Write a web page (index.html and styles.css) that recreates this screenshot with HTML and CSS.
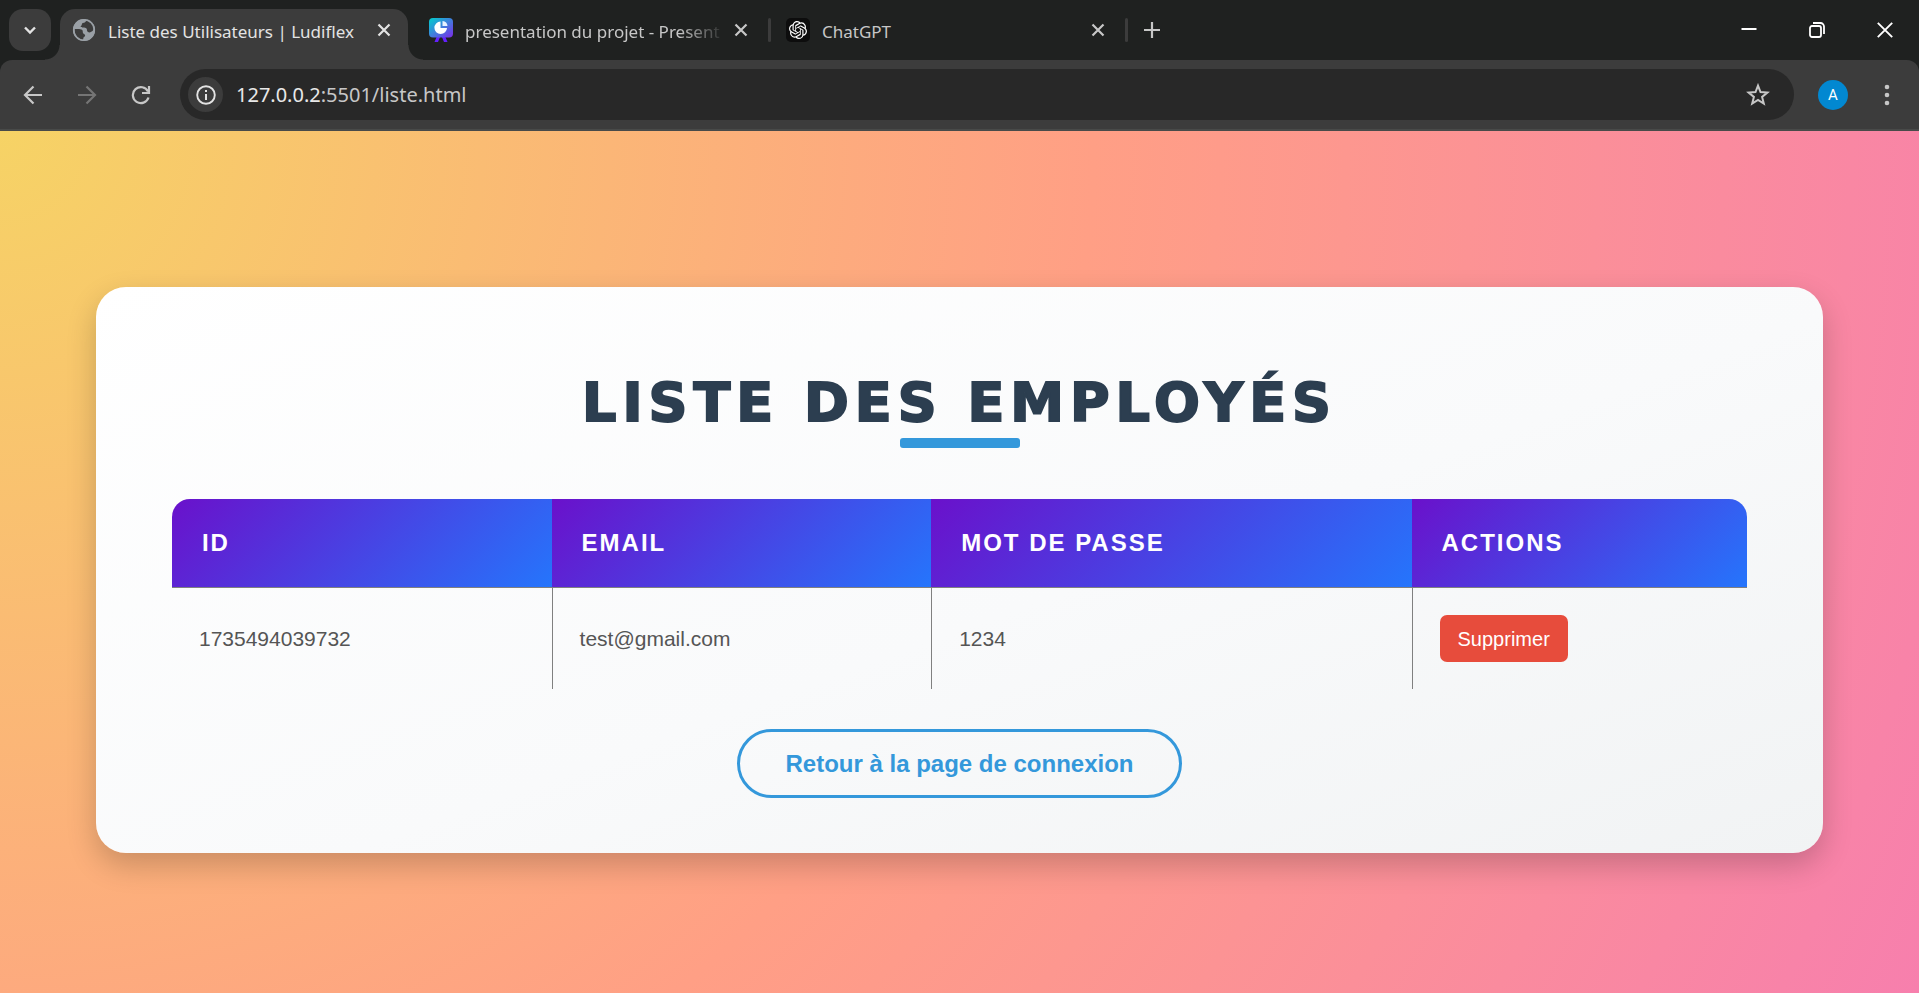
FILE: index.html
```html
<!DOCTYPE html>
<html lang="fr">
<head>
<meta charset="utf-8">
<title>Liste des Utilisateurs | Ludiflex</title>
<link rel="stylesheet" href="styles.css">
</head>
<body>
<header class="browser">
  <div class="tabstrip">
    <button class="tab-search" aria-label="Rechercher dans les onglets"><svg width="14" height="14" viewBox="0 0 14 14"><path d="M2 4.500l5 5 5-5" fill="none" stroke="#e3e3e3" stroke-width="2.400"/></svg></button>
    <div class="tab tab-active">
      <svg class="favicon" width="24" height="24" viewBox="0 0 24 24"><circle cx="12" cy="12" r="11" fill="#9aa0a6"/><path d="M14 1.500c.5 2-1 3.500-3.500 3.500-1 1.500-.5 2.500-2 3.500 1 2 4.500.5 6 2 .8 1 0 2.500 1.500 3.500s3.500 0 5-1.500l1-3C21 5 18.500 2.500 14 1.500zM2.500 11c2 0 6-.5 7.500.8 1.500 1.400 0 3.200 2 4.200s1 2.500-.5 3.500L11 22C6 21.500 2.500 17 2.500 11z" fill="#3c3c3c"/><circle cx="12" cy="12" r="10.300" fill="none" stroke="#9aa0a6" stroke-width="1.600"/></svg>
      <span class="tab-title">Liste des Utilisateurs | Ludiflex</span>
      <button class="close" aria-label="Fermer"><svg width="14" height="14" viewBox="0 0 14 14"><path d="M1.500 1.500l11 11M12.500 1.500l-11 11" stroke="#e3e3e3" stroke-width="2.200"/></svg></button>
    </div>
    <div class="tab">
      <svg class="favicon" width="24" height="24" viewBox="0 0 24 24"><defs><linearGradient id="g" x1="0" y1="0" x2="1" y2="1"><stop offset="0" stop-color="#00d0cc"/><stop offset=".5" stop-color="#3f7fdc"/><stop offset="1" stop-color="#7d2ae8"/></linearGradient></defs><path d="M8 18h3.500L9 24H5.500zM12.500 18H16l2.500 6H15z" fill="#6420ff"/><rect width="24" height="19.500" rx="4" fill="url(#g)"/><path d="M11.500 3.500V10H18a6.300 6.300 0 1 1-6.500-6.500z" fill="#fff"/><path d="M13.500 3a5.500 5.500 0 0 1 5 5h-5z" fill="#e6f1ff"/></svg>
      <span class="tab-title tab-fade">presentation du projet - Present</span>
      <button class="close" aria-label="Fermer"><svg width="14" height="14" viewBox="0 0 14 14"><path d="M1.500 1.500l11 11M12.500 1.500l-11 11" stroke="#c7c7c7" stroke-width="2.200"/></svg></button>
    </div>
    <span class="divider"></span>
    <div class="tab">
      <svg class="favicon" width="24" height="24" viewBox="0 0 24 24"><rect width="24" height="24" rx="5" fill="#0d0d0d"/><g transform="translate(3 3) scale(.75)"><path fill="#fff" d="M22.282 9.821a5.985 5.985 0 0 0-.516-4.910 6.046 6.046 0 0 0-6.510-2.900A6.065 6.065 0 0 0 4.981 4.182a5.985 5.985 0 0 0-3.998 2.900 6.046 6.046 0 0 0 .743 7.097 5.980 5.980 0 0 0 .510 4.911 6.051 6.051 0 0 0 6.515 2.900A5.985 5.985 0 0 0 13.260 24a6.056 6.056 0 0 0 5.772-4.206 5.990 5.990 0 0 0 3.997-2.900 6.056 6.056 0 0 0-.747-7.073zM13.260 22.430a4.476 4.476 0 0 1-2.876-1.040l.141-.081 4.779-2.758a.795.795 0 0 0 .392-.681v-6.737l2.020 1.168a.071.071 0 0 1 .038.052v5.583a4.504 4.504 0 0 1-4.494 4.494zM3.600 18.304a4.470 4.470 0 0 1-.535-3.014l.142.085 4.783 2.759a.771.771 0 0 0 .780 0l5.843-3.369v2.332a.080.080 0 0 1-.033.062L9.740 19.950a4.500 4.500 0 0 1-6.140-1.646zM2.340 7.896a4.485 4.485 0 0 1 2.366-1.973V11.600a.766.766 0 0 0 .388.676l5.815 3.355-2.020 1.168a.076.076 0 0 1-.071 0l-4.830-2.786A4.504 4.504 0 0 1 2.340 7.872zm16.597 3.855l-5.833-3.387L15.119 7.200a.076.076 0 0 1 .071 0l4.830 2.791a4.494 4.494 0 0 1-.676 8.105v-5.678a.790.790 0 0 0-.407-.667zm2.010-3.023l-.141-.085-4.774-2.782a.776.776 0 0 0-.785 0L9.409 9.230V6.897a.066.066 0 0 1 .028-.061l4.830-2.787a4.500 4.500 0 0 1 6.680 4.660zm-12.640 4.135l-2.020-1.164a.080.080 0 0 1-.038-.057V6.075a4.500 4.500 0 0 1 7.375-3.453l-.142.080L8.704 5.460a.795.795 0 0 0-.393.681zm1.097-2.365l2.602-1.500 2.607 1.500v2.999l-2.597 1.500-2.607-1.500z"/></g></svg>
      <span class="tab-title">ChatGPT</span>
      <button class="close" aria-label="Fermer"><svg width="14" height="14" viewBox="0 0 14 14"><path d="M1.500 1.500l11 11M12.500 1.500l-11 11" stroke="#c7c7c7" stroke-width="2.200"/></svg></button>
    </div>
    <span class="divider"></span>
    <button class="new-tab" aria-label="Nouvel onglet"><svg width="16" height="16" viewBox="0 0 16 16"><path d="M8 0v16M0 8h16" stroke="#c7c7c7" stroke-width="2.200"/></svg></button>
    <div class="window-controls">
      <button aria-label="Réduire"><svg width="16" height="16" viewBox="0 0 16 16"><path d="M.5 7h15" stroke="#fff" stroke-width="2"/></svg></button>
      <button aria-label="Restaurer"><svg width="16" height="16" viewBox="0 0 16 16" fill="none" stroke="#fff" stroke-width="1.800"><rect x="1" y="4" width="11" height="11" rx="2"/><path d="M4 1h7.500A3.500 3.500 0 0 1 15 4.500V12"/></svg></button>
      <button aria-label="Fermer la fenêtre"><svg width="16" height="16" viewBox="0 0 16 16"><path d="M.8.800l14.400 14.400M15.200.800L.8 15.200" stroke="#fff" stroke-width="1.900"/></svg></button>
    </div>
  </div>
  <div class="toolbar">
    <button class="nav" aria-label="Précédent"><svg width="20" height="20" viewBox="0 0 20 20" fill="none" stroke="#c7c7c7" stroke-width="2.200"><path d="M19 10H2.500M10.500 1.500L2 10l8.500 8.500"/></svg></button>
    <button class="nav" aria-label="Suivant"><svg width="20" height="20" viewBox="0 0 20 20" fill="none" stroke="#757575" stroke-width="2.200"><path d="M1 10h16.500M9.500 1.500L18 10l-8.500 8.500"/></svg></button>
    <button class="nav" aria-label="Actualiser"><svg width="20" height="20" viewBox="0 0 20 20" fill="none" stroke="#c7c7c7" stroke-width="2.200"><path d="M17.500 12.500A8 8 0 1 1 17 6.500M18 1v7h-7"/></svg></button>
    <div class="omnibox">
      <button class="info" aria-label="Informations sur le site"><svg width="20" height="20" viewBox="0 0 20 20"><circle cx="10" cy="10" r="8.800" fill="none" stroke="#e3e3e3" stroke-width="1.900"/><path d="M10 9v6M10 5v2.100" stroke="#e3e3e3" stroke-width="2"/></svg></button>
      <a class="url" href="#"><span class="host">127.0.0.2</span>:5501/liste.html</a>
      <button class="star" aria-label="Ajouter aux favoris"><svg width="24" height="24" viewBox="0 0 24 24"><path d="M12 2.600l2.500 6.400 6.900.5-5.300 4.400 1.700 6.700L12 16.900l-5.800 3.700 1.700-6.700L2.600 9.500l6.900-.5z" fill="none" stroke="#c7c7c7" stroke-width="2"/></svg></button>
    </div>
    <button class="avatar">A</button>
    <button class="menu" aria-label="Menu"><svg width="6" height="22" viewBox="0 0 6 22" fill="#c7c7c7"><circle cx="3" cy="3" r="2.300"/><circle cx="3" cy="11" r="2.300"/><circle cx="3" cy="19" r="2.300"/></svg></button>
  </div>
</header>
<main class="page">
  <section class="card">
    <h1 class="heading">Liste des employés</h1>
    <table class="users">
      <thead><tr><th class="col-id">ID</th><th class="col-mail">Email</th><th class="col-pass">Mot de passe</th><th>Actions</th></tr></thead>
      <tbody><tr><td>1735494039732</td><td>test@gmail.com</td><td>1234</td><td><button class="delete">Supprimer</button></td></tr></tbody>
    </table>
    <a class="back" href="#">Retour à la page de connexion</a>
  </section>
</main>
</body>
</html>
```

FILE: styles.css
```css
* { box-sizing: border-box; }
body {
  margin: 0;
  min-height: 100vh;
  display: flex;
  flex-direction: column;
  font-family: "Liberation Sans", Arial, sans-serif;
}
button { border: 0; padding: 0; background: none; font: inherit; color: inherit; }
svg { display: block; flex: none; }

.browser { background: #1f2120; font-family: "Noto Sans", "Open Sans", sans-serif; }
.tabstrip { display: flex; align-items: center; height: 60px; padding-left: 9px; }
.tab-search {
  width: 42px; height: 42px; margin-right: 9px;
  display: grid; place-items: center;
  border-radius: 14px; background: #3c3c3c;
}
.tab {
  position: relative;
  display: flex; align-items: center;
  width: 348px; height: 51px; align-self: flex-end;
  padding: 0 17px 9px 12px;
  color: #c7c7c7;
}
.tab + .tab { padding: 0 20px 9px 21px; width: 360px; }
.tab-active { background: #3c3c3c; border-radius: 15px 15px 0 0; color: #e3e3e3; }
.tab-active::before, .tab-active::after {
  content: ""; position: absolute; bottom: 0; width: 15px; height: 15px;
}
.tab-active::before { left: -15px; background: radial-gradient(circle at 0 0, transparent 14px, #3c3c3c 15px); }
.tab-active::after { right: -15px; background: radial-gradient(circle at 100% 0, transparent 14px, #3c3c3c 15px); }
.tab-title { flex: 1; margin: 3px 12px 0; white-space: nowrap; font-size: 17px; line-height: 24px; }
.tab-fade { margin-right: 8px; mask-image: linear-gradient(90deg, #000 82%, transparent); }
.close { width: 14px; height: 14px; }
.divider { width: 3px; height: 24px; background: #3c3c3c; border-radius: 2px; }
.divider + .tab { width: 354px; padding: 0 20px 9px 15px; }
.new-tab { margin-left: 16px; }
.window-controls { display: flex; gap: 52px; margin-left: auto; padding-right: 26px; }

.toolbar {
  display: flex; align-items: center; height: 71px;
  padding: 0 29px 0 23px;
  background: #3c3c3c;
  border-bottom: 2px solid #484a49;
  border-radius: 12px 12px 0 0;
}
.nav { margin-right: 34px; }
.nav:nth-of-type(3) { margin-right: 29px; }
.omnibox {
  flex: 1; display: flex; align-items: center;
  height: 51px; padding: 0 24px 0 8px;
  border-radius: 26px; background: #282828;
}
.info { width: 35px; height: 35px; display: grid; place-items: center; border-radius: 50%; background: #3c3c3c; }
.url { flex: 1; margin-left: 13px; color: #c7c7c7; font-size: 20px; line-height: 28px; text-decoration: none; }
.host { color: #e8e8e8; }
.avatar {
  width: 30px; height: 30px; margin: 0 36px 0 24px;
  border-radius: 50%; background: #0288d1; color: #fff;
  font: 15px/30px Roboto, sans-serif;
}

.page {
  flex: 1; display: flex; align-items: center; justify-content: center;
  padding: 32px 0 16px;
  background: radial-gradient(circle at top left, #f6d365, #ff9f85 52%, #f77fad);
}
.card {
  width: 90%; padding: 83px 76px 55px;
  display: flex; flex-direction: column; align-items: center;
  border-radius: 30px;
  background: linear-gradient(160deg, #ffffff, #f9fafb 55%, #f1f3f4);
  box-shadow: 0 12px 30px rgba(0, 0, 0, 0.2);
}
.heading {
  position: relative;
  margin: 0 0 51px; padding-bottom: 12px;
  color: #2c3e50;
  font-family: "DejaVu Sans", sans-serif; font-size: 54px; line-height: 66px; font-weight: 900;
  letter-spacing: 6px; text-transform: uppercase;
  -webkit-text-stroke: 2px #2c3e50;
}
.heading::after {
  content: ""; position: absolute; bottom: 0; left: 50%;
  width: 120px; height: 10px; margin-left: -60px;
  border-radius: 3px; background: #3498db;
}
.users { width: 100%; table-layout: fixed; border-collapse: separate; border-spacing: 0; }
.users th {
  height: 89px; padding: 0 30px; text-align: left;
  background: linear-gradient(135deg, #6a11cb, #2575fc);
  border-bottom: 1px solid #808080;
  color: #fff; font-size: 24px; line-height: 28px;
  letter-spacing: 2px; text-transform: uppercase;
}
.users th:first-child { border-top-left-radius: 18px; }
.users th:last-child { border-top-right-radius: 18px; }
.col-id, .col-mail { width: 24.1%; }
.col-pass { width: 30.5%; }
.users td { height: 101px; padding: 0 27px; color: #555; font-size: 21px; line-height: 24px; }
.users td + td { border-left: 1px solid #808080; }
.delete {
  height: 47px; padding: 0 18px;
  border-radius: 7px; background: #e74c3c; color: #fff; font-size: 20px;
}
.back {
  margin-top: 40px; padding: 17px 45px;
  border: 3px solid #3498db; border-radius: 36px;
  color: #3498db; font-size: 24px; line-height: 29px; font-weight: 700; text-decoration: none;
}
```
